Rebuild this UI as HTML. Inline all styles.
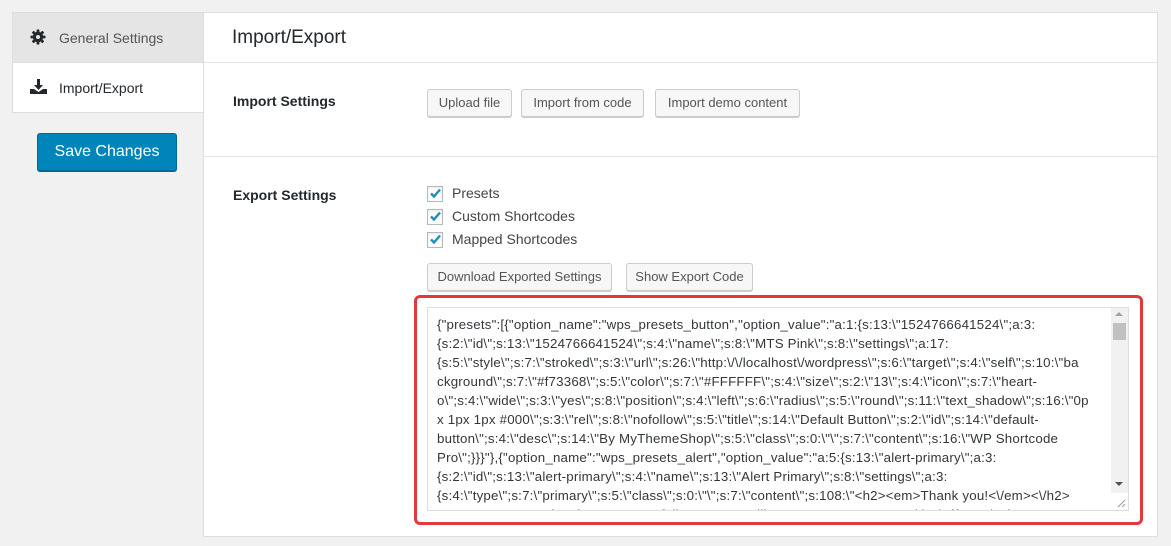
<!DOCTYPE html>
<html><head><style>
*{box-sizing:border-box;margin:0;padding:0}
body{width:1171px;height:546px;background:#f1f1f1;font-family:"Liberation Sans",sans-serif;color:#23282d;position:relative;overflow:hidden;font-size:13px}
.abs{position:absolute}
.tab{position:absolute;left:12px;width:192px;height:51px;border:1px solid #ddd;font-size:14px;color:#555;padding-left:46px;line-height:50px}
.main{position:absolute;left:203px;top:12px;width:955px;height:525px;background:#fff;border:1px solid #ddd}
.btn{position:absolute;height:28px;border:1px solid #ccc;background:#f7f7f7;border-radius:3px;box-shadow:0 1px 0 #ccc;font-size:13px;color:#555;line-height:26px;text-align:center}
.lbl{position:absolute;font-size:14px;font-weight:bold;color:#23282d}
.cb{position:absolute;left:427px;width:16px;height:16px;border:1px solid #b4b9be;background:#fff;box-shadow:inset 0 1px 2px rgba(0,0,0,.1)}
.cbt{position:absolute;left:452px;font-size:14px;color:#444}
.ta{position:absolute;left:427px;top:307px;width:702px;height:204px;border:1px solid #ddd;background:#fff;overflow:hidden}
.ta pre{font-family:"Liberation Sans",sans-serif;font-size:13.3px;letter-spacing:.2px;line-height:19px;color:#32373c;padding:7px 0 0 9px;white-space:pre}
</style></head><body>
<div class="tab" style="top:12px;background:#e5e5e5">General Settings</div>
<svg class="abs" style="left:30px;top:29px" width="16" height="16" viewBox="0 0 16 16"><g fill="#23282d"><circle cx="8" cy="8" r="5.2"/><rect x="6.6" y="0.5" width="2.8" height="15" rx=".5"/><rect x="0.5" y="6.6" width="15" height="2.8" rx=".5"/><rect x="6.6" y="0.5" width="2.8" height="15" rx=".5" transform="rotate(45 8 8)"/><rect x="6.6" y="0.5" width="2.8" height="15" rx=".5" transform="rotate(-45 8 8)"/></g><circle cx="8" cy="8" r="2" fill="#e5e5e5"/></svg>
<div class="tab" style="top:62px;background:#fff;color:#23282d;border-right:none;width:192px">Import/Export</div>
<svg class="abs" style="left:30px;top:79px" width="17" height="15" viewBox="0 0 17 15"><path d="M7 0h3v6h3l-4.5 5L4 6h3z" fill="#23282d"/><path d="M0 10h4l4.5 3 4.5-3h4v5H0z" fill="#23282d"/></svg>
<div class="abs" style="left:37px;top:133px;width:140px;height:38px;background:#0085ba;border:1px solid #006799;border-radius:3px;box-shadow:0 1px 0 #006799;color:#fff;font-size:16px;line-height:36px;text-align:center">Save Changes</div>
<div class="main"></div>
<div class="abs" style="left:232px;top:27px;font-size:19px;color:#23282d">Import/Export</div>
<div class="abs" style="left:204px;top:62px;width:953px;height:1px;background:#e5e5e5"></div>
<div class="lbl" style="left:233px;top:93px">Import Settings</div>
<div class="btn" style="left:427px;top:89px;width:85px">Upload file</div>
<div class="btn" style="left:521px;top:89px;width:123px">Import from code</div>
<div class="btn" style="left:655px;top:89px;width:145px">Import demo content</div>
<div class="abs" style="left:204px;top:156px;width:953px;height:1px;background:#e5e5e5"></div>
<div class="lbl" style="left:233px;top:187px">Export Settings</div>
<div class="cb" style="top:186px"></div><div class="cbt" style="top:185px">Presets</div>
<div class="cb" style="top:209px"></div><div class="cbt" style="top:208px">Custom Shortcodes</div>
<div class="cb" style="top:232px"></div><div class="cbt" style="top:231px">Mapped Shortcodes</div>
<svg class="abs" style="left:428px;top:186px" width="16" height="62" viewBox="0 0 16 62"><g fill="none" stroke="#1e8cbe" stroke-width="2.4"><path d="M3 7.5l3 3 6-7"/><path d="M3 30.5l3 3 6-7"/><path d="M3 53.5l3 3 6-7"/></g></svg>
<div class="btn" style="left:427px;top:263px;width:185px">Download Exported Settings</div>
<div class="btn" style="left:626px;top:263px;width:127px">Show Export Code</div>
<div class="abs" style="left:414px;top:295px;width:729px;height:230px;border:3px solid #e2393f;border-radius:6px"></div>
<div class="ta"><pre>{"presets":[{"option_name":"wps_presets_button","option_value":"a:1:{s:13:\"1524766641524\";a:3:
{s:2:\"id\";s:13:\"1524766641524\";s:4:\"name\";s:8:\"MTS Pink\";s:8:\"settings\";a:17:
{s:5:\"style\";s:7:\"stroked\";s:3:\"url\";s:26:\"http:\/\/localhost\/wordpress\";s:6:\"target\";s:4:\"self\";s:10:\"ba
ckground\";s:7:\"#f73368\";s:5:\"color\";s:7:\"#FFFFFF\";s:4:\"size\";s:2:\"13\";s:4:\"icon\";s:7:\"heart-
o\";s:4:\"wide\";s:3:\"yes\";s:8:\"position\";s:4:\"left\";s:6:\"radius\";s:5:\"round\";s:11:\"text_shadow\";s:16:\"0p
x 1px 1px #000\";s:3:\"rel\";s:8:\"nofollow\";s:5:\"title\";s:14:\"Default Button\";s:2:\"id\";s:14:\"default-
button\";s:4:\"desc\";s:14:\"By MyThemeShop\";s:5:\"class\";s:0:\"\";s:7:\"content\";s:16:\"WP Shortcode
Pro\";}}}"},{"option_name":"wps_presets_alert","option_value":"a:5:{s:13:\"alert-primary\";a:3:
{s:2:\"id\";s:13:\"alert-primary\";s:4:\"name\";s:13:\"Alert Primary\";s:8:\"settings\";a:3:
{s:4:\"type\";s:7:\"primary\";s:5:\"class\";s:0:\"\";s:7:\"content\";s:108:\"&lt;h2&gt;&lt;em&gt;Thank you!&lt;\/em&gt;&lt;\/h2&gt;
&lt;p&gt;Your message has been successfully sent. We will contact you very soon!&lt;\/p&gt;\";}}s:13:\"alert-</pre></div>
<div class="abs" style="left:1111px;top:308px;width:17px;height:202px;background:#f1f1f1"></div>
<div class="abs" style="left:1113px;top:323px;width:13px;height:17px;background:#c1c1c1"></div>
<div class="abs" style="left:1115px;top:312px;width:0;height:0;border-left:4px solid transparent;border-right:4px solid transparent;border-bottom:4px solid #a3a3a3"></div>
<div class="abs" style="left:1115px;top:482px;width:0;height:0;border-left:4px solid transparent;border-right:4px solid transparent;border-top:4px solid #505050"></div>
<div class="abs" style="left:1111px;top:493px;width:17px;height:17px;background:#fff"></div>
<svg class="abs" style="left:1117px;top:499px" width="9" height="9"><path d="M1 8L8 1M5 8L8 5" stroke="#999" stroke-width="1"/></svg>
</body></html>
